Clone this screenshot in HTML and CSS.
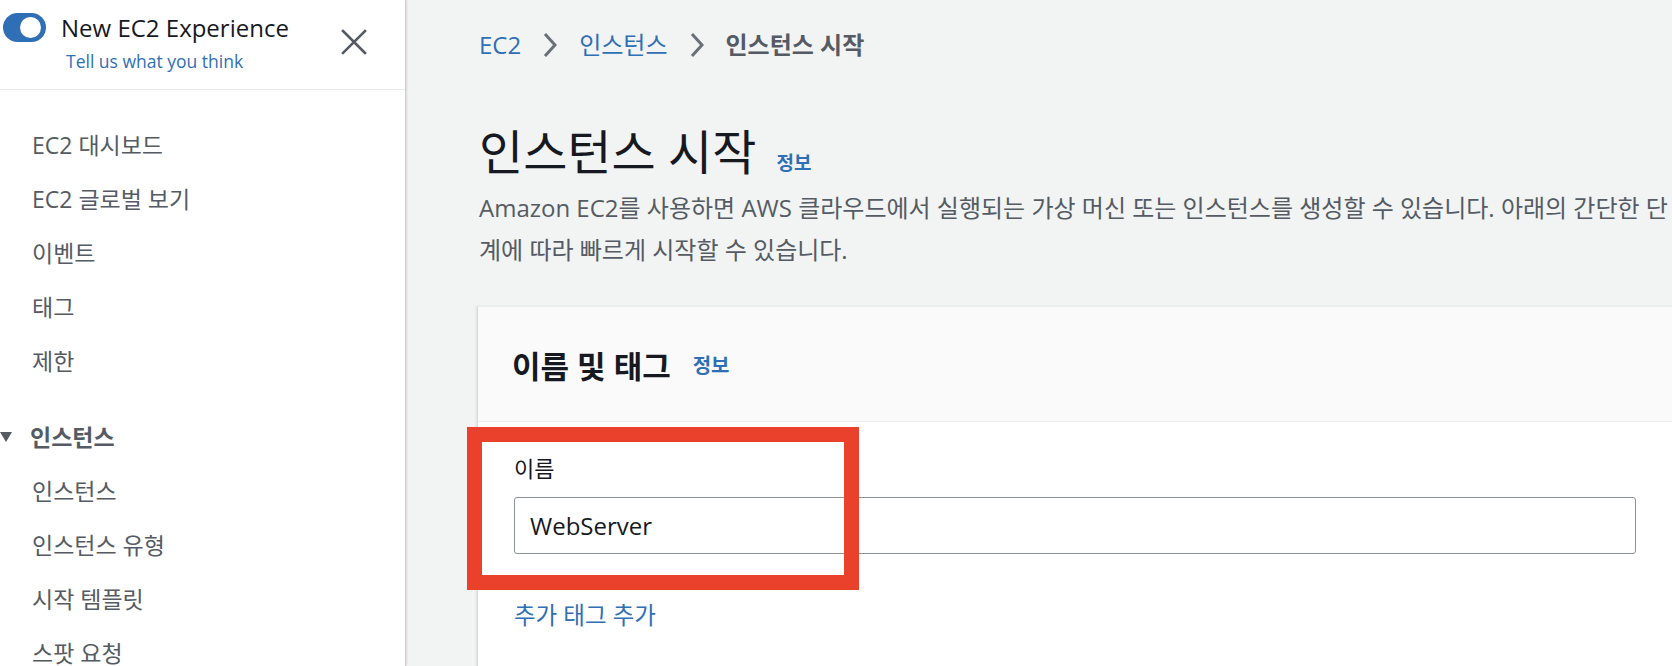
FILE: index.html
```html
<!DOCTYPE html>
<html lang="ko">
<head>
<meta charset="utf-8">
<title>인스턴스 시작</title>
<link rel="stylesheet" href="styles.css">
</head>
<body>
<div class="app">
  <aside class="sidebar">
    <div class="side-head">
      <div class="toggle"><span class="knob"></span></div>
      <div class="side-title">
        <div class="exp">New EC2 Experience</div>
        <a class="feedback">Tell us what you think</a>
      </div>
      <button class="close" aria-label="close">
        <svg width="26" height="26" viewBox="0 0 26 26"><path d="M2 2 L24 24 M24 2 L2 24" stroke="#545b64" stroke-width="2.6" stroke-linecap="square" fill="none"/></svg>
      </button>
    </div>
    <nav class="nav">
      <ul class="nav-list">
        <li>EC2 대시보드</li>
        <li>EC2 글로벌 보기</li>
        <li>이벤트</li>
        <li>태그</li>
        <li>제한</li>
      </ul>
      <div class="nav-group">
        <div class="group-head"><span class="caret"></span>인스턴스</div>
        <ul class="nav-list">
          <li>인스턴스</li>
          <li>인스턴스 유형</li>
          <li>시작 템플릿</li>
          <li>스팟 요청</li>
        </ul>
      </div>
    </nav>
  </aside>
  <main class="main">
    <nav class="crumbs">
      <a class="crumb-link">EC2</a>
      <svg class="chev" width="14" height="26" viewBox="0 0 14 26"><path d="M2 2 L12 13 L2 24" stroke="#687078" stroke-width="3" fill="none"/></svg>
      <a class="crumb-link">인스턴스</a>
      <svg class="chev" width="14" height="26" viewBox="0 0 14 26"><path d="M2 2 L12 13 L2 24" stroke="#687078" stroke-width="3" fill="none"/></svg>
      <span class="crumb-current">인스턴스 시작</span>
    </nav>
    <div class="page-head">
      <h1>인스턴스 시작</h1>
      <a class="info">정보</a>
    </div>
    <p class="desc">Amazon EC2를 사용하면 AWS 클라우드에서 실행되는 가상 머신 또는 인스턴스를 생성할 수 있습니다. 아래의 간단한 단<br>계에 따라 빠르게 시작할 수 있습니다.</p>
    <section class="card">
      <header class="card-head">
        <h2>이름 및 태그</h2>
        <a class="info info-lg">정보</a>
      </header>
      <div class="card-body">
        <label class="field-label">이름</label>
        <div class="input">WebServer</div>
        <a class="add-tag">추가 태그 추가</a>
        <div class="highlight"></div>
      </div>
    </section>
  </main>
</div>
</body>
</html>
```
FILE: styles.css
```css
* { box-sizing: border-box; }
html, body { margin: 0; padding: 0; }
body {
  font-family: "Open Sans", "Noto Sans CJK KR", sans-serif;
  color: #16191f;
  background: #f2f3f3;
  width: 1672px;
  height: 666px;
  overflow: hidden;
}
a { color: #2f6fb6; text-decoration: none; }
ul { list-style: none; margin: 0; padding: 0; }

.app { display: flex; height: 666px; }

.sidebar {
  width: 406px;
  flex: none;
  background: #fff;
  border-right: 1px solid #c9cfcf;
  box-shadow: 1px 0 2px rgba(0,0,0,0.10);
  position: relative;
  z-index: 1;
}
.side-head {
  display: flex;
  align-items: flex-start;
  height: 90px;
  padding: 13px 0 0 3px;
  border-bottom: 1px solid #eaeded;
}
.toggle {
  width: 43px;
  height: 29px;
  margin-top: 0;
  border-radius: 15px;
  background: #2f6fb6;
  display: flex;
  align-items: center;
  justify-content: flex-end;
  padding-right: 5px;
}
.knob {
  width: 21px;
  height: 21px;
  border-radius: 50%;
  background: #fff;
}
.side-title { margin-left: 15px; }
.exp {
  font-size: 24px;
  line-height: 30px;
  color: #16191f;
}
.feedback {
  display: block;
  margin: 7px 0 0 5px;
  font-size: 17.5px;
  line-height: 22px;
}
.close {
  margin: 16px 38px 0 auto;
  padding: 0;
  border: 0;
  background: none;
  width: 26px;
  height: 26px;
  display: block;
}
.close svg { display: block; }

.nav { padding-top: 28px; }
.nav-list li {
  padding-left: 32px;
  font-size: 23px;
  line-height: 54px;
  color: #545b64;
  white-space: nowrap;
}
.nav-group { margin-top: 22px; }
.group-head {
  display: flex;
  align-items: center;
  font-size: 23px;
  line-height: 54px;
  font-weight: 700;
  color: #545b64;
}
.caret {
  width: 0;
  height: 0;
  border-left: 6px solid transparent;
  border-right: 6px solid transparent;
  border-top: 10px solid #545b64;
  margin-right: 18px;
}

.main {
  flex: 1;
  min-width: 0;
  padding-left: 73px;
  overflow: hidden;
}
.crumbs {
  display: flex;
  align-items: center;
  padding-top: 30px;
  height: 60px;
  font-size: 24px;
  line-height: 30px;
}
.chev { margin: 0 22px; display: block; }
.crumb-current { font-weight: 700; color: #545b64; }

.page-head {
  display: flex;
  align-items: baseline;
  margin-top: 62px;
}
h1 {
  margin: 0;
  font-size: 48px;
  line-height: 60px;
  font-weight: 400;
  color: #16191f;
}
.info {
  margin-left: 20px;
  font-size: 19px;
  font-weight: 700;
}
.desc {
  margin: 5px 0 0;
  font-size: 24px;
  line-height: 42px;
  color: #545b64;
  white-space: nowrap;
}

.card {
  margin-top: 35px;
  margin-left: -2px;
  background: #fff;
  border-left: 1px solid #d5dbdb;
  border-top: 1px solid #eaeded;
  box-shadow: -1px 0 2px rgba(0,0,0,0.08);
}
.card-head {
  display: flex;
  align-items: center;
  height: 115px;
  padding-left: 34px;
  background: #fafafa;
  border-bottom: 1px solid #eaeded;
}
h2 {
  margin: 0;
  font-size: 31px;
  font-weight: 700;
  color: #16191f;
}
.info-lg { font-size: 20px; margin-left: 22px; }
.card-body {
  position: relative;
  padding: 31px 36px 60px;
}
.field-label {
  display: block;
  font-size: 22px;
  line-height: 30px;
  color: #16191f;
}
.input {
  margin-top: 14px;
  height: 57px;
  border: 1px solid #879596;
  border-radius: 3px;
  padding-left: 15px;
  display: flex;
  align-items: center;
  font-size: 24px;
  color: #16191f;
  background: #fff;
}
.add-tag {
  display: block;
  margin-top: 46px;
  font-size: 23.5px;
  line-height: 30px;
}
.highlight {
  position: absolute;
  top: 5px;
  left: -11px;
  width: 392px;
  height: 163px;
  border: 15px solid #e9412b;
}
```
